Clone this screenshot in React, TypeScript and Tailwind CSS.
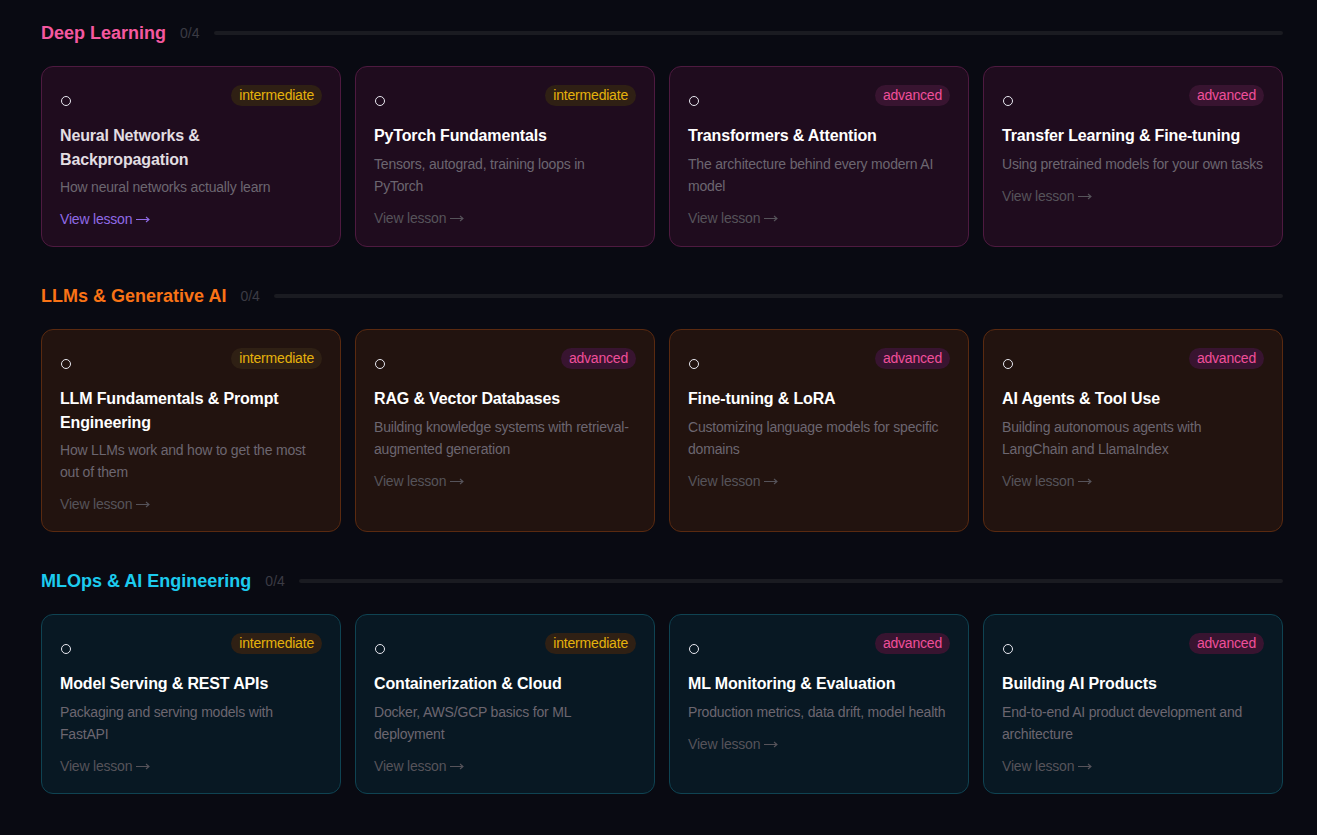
type Level = "intermediate" | "advanced";

interface Lesson {
  title: string;
  desc: string;
  level: Level;
}

interface Section {
  name: string;
  theme: "pink" | "orange" | "cyan";
  lessons: Lesson[];
}

const sections: Section[] = [
  {
    name: "Deep Learning",
    theme: "pink",
    lessons: [
      { title: "Neural Networks & Backpropagation", desc: "How neural networks actually learn", level: "intermediate" },
      { title: "PyTorch Fundamentals", desc: "Tensors, autograd, training loops in PyTorch", level: "intermediate" },
      { title: "Transformers & Attention", desc: "The architecture behind every modern AI model", level: "advanced" },
      { title: "Transfer Learning & Fine-tuning", desc: "Using pretrained models for your own tasks", level: "advanced" },
    ],
  },
  {
    name: "LLMs & Generative AI",
    theme: "orange",
    lessons: [
      { title: "LLM Fundamentals & Prompt Engineering", desc: "How LLMs work and how to get the most out of them", level: "intermediate" },
      { title: "RAG & Vector Databases", desc: "Building knowledge systems with retrieval-augmented generation", level: "advanced" },
      { title: "Fine-tuning & LoRA", desc: "Customizing language models for specific domains", level: "advanced" },
      { title: "AI Agents & Tool Use", desc: "Building autonomous agents with LangChain and LlamaIndex", level: "advanced" },
    ],
  },
  {
    name: "MLOps & AI Engineering",
    theme: "cyan",
    lessons: [
      { title: "Model Serving & REST APIs", desc: "Packaging and serving models with FastAPI", level: "intermediate" },
      { title: "Containerization & Cloud", desc: "Docker, AWS/GCP basics for ML deployment", level: "intermediate" },
      { title: "ML Monitoring & Evaluation", desc: "Production metrics, data drift, model health", level: "advanced" },
      { title: "Building AI Products", desc: "End-to-end AI product development and architecture", level: "advanced" },
    ],
  },
];

const themes = {
  pink: { heading: "text-[#f4589f]", card: "bg-[#1f0c1e] border-[#4e1a40]" },
  orange: { heading: "text-[#f97316]", card: "bg-[#22130f] border-[#5a2a10]" },
  cyan: { heading: "text-[#1ccbee]", card: "bg-[#081823] border-[#0f4352]" },
};

function Badge({ level }: { level: Level }) {
  if (level === "intermediate") {
    return (
      <span className="rounded-full bg-[#2f2014] px-2 text-sm leading-[21px] tracking-[-0.2px] text-[#e5b20c]">
        intermediate
      </span>
    );
  }
  return (
    <span className="rounded-full bg-[#381430] px-2 text-sm leading-[21px] tracking-[-0.2px] text-[#ef4f9a]">
      advanced
    </span>
  );
}

function Arrow() {
  return (
    <svg className="ml-1 inline-block" width="14" height="8" viewBox="0 0 14 8" fill="none">
      <path d="M0 4.5H13M10 2L13 4.5L10 7" stroke="currentColor" strokeWidth="1.1" />
    </svg>
  );
}

function LessonCard({ lesson, theme, active }: { lesson: Lesson; theme: Section["theme"]; active: boolean }) {
  return (
    <div className={`flex flex-col rounded-xl border px-[18px] pt-[18px] pb-[17px] ${themes[theme].card}`}>
      <div className="flex items-end justify-between">
        <span className="ml-[1px] block h-[10px] w-[10px] rounded-full border-[1.5px] border-[#e8e8f0]" />
        <Badge level={lesson.level} />
      </div>
      <h3
        className={`mt-[18px] text-base leading-[23.5px] font-bold tracking-[-0.15px] ${active ? "text-[#e2dee2]" : "text-white"}`}
      >
        {lesson.title}
      </h3>
      <p className="mt-[5px] text-sm leading-[22px] tracking-[-0.2px] text-[#6c6670]">{lesson.desc}</p>
      <div
        className={`mt-[11px] flex items-center text-sm leading-5 tracking-[-0.2px] ${active ? "text-[#8f6ae6]" : "text-[#56535a]"}`}
      >
        View lesson
        <Arrow />
      </div>
    </div>
  );
}

export default function App() {
  return (
    <div
      className="h-screen overflow-hidden bg-[#090a12] pt-[20px] pr-[34px] pl-[41px]"
      style={{ fontFamily: '"Liberation Sans", Arial, sans-serif' }}
    >
      <div className="flex flex-col gap-[36px]">
        {sections.map((section, si) => (
          <section key={section.name}>
            <div className="flex items-center gap-[14px]">
              <h2 className={`text-lg leading-[26px] font-bold ${themes[section.theme].heading}`}>{section.name}</h2>
              <span className="text-sm text-[#3b3b44]">0/4</span>
              <div className="h-[4px] flex-1 rounded-full bg-[#1a1b21]" />
            </div>
            <div className="mt-[20px] grid grid-cols-4 gap-[14px]">
              {section.lessons.map((lesson, li) => (
                <LessonCard key={lesson.title} lesson={lesson} theme={section.theme} active={si === 0 && li === 0} />
              ))}
            </div>
          </section>
        ))}
      </div>
    </div>
  );
}
